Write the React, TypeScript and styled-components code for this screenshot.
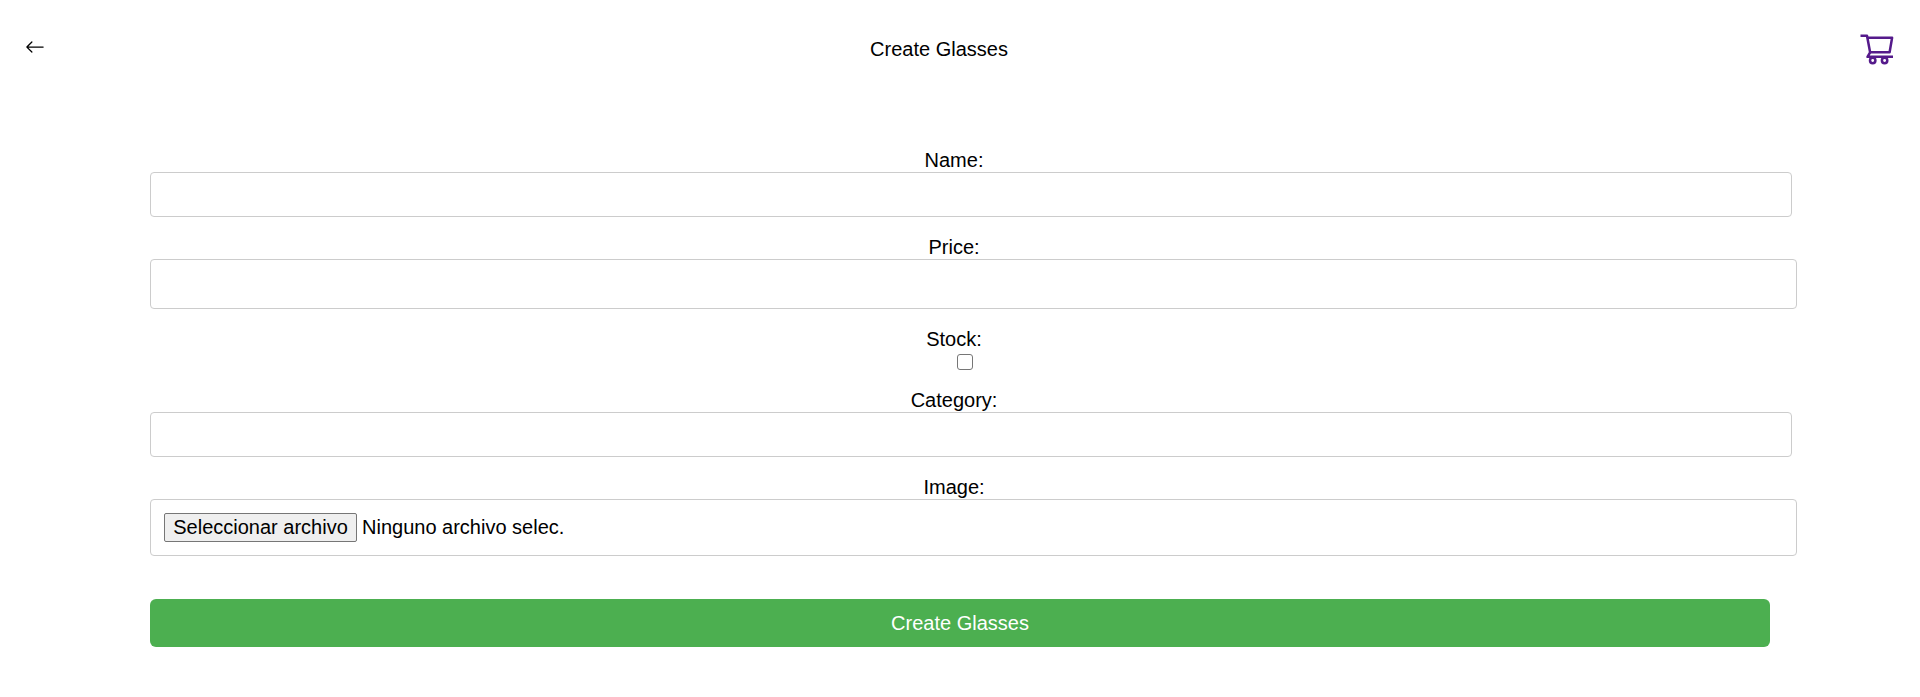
import React from "react";
import styled, { createGlobalStyle } from "styled-components";
import { BsArrowLeft } from "react-icons/bs";

const GlobalStyle = createGlobalStyle`
  body {
    margin: 0;
    background: #fff;
    color: #000;
    font: 20px/23px "Liberation Sans", Arial, sans-serif;
  }
`;

const Page = styled.div`
  min-height: 697px;
`;

const Header = styled.header`
  display: flex;
  justify-content: space-between;
  align-items: flex-start;
  height: 119px;
  padding: 30px 24px 0 25px;
`;

const BackLink = styled.a`
  display: flex;
  padding-top: 7px;
  width: 40px;
  color: #000;
`;

const Title = styled.div`
  padding-top: 8px;
  margin-right: 43px;
`;

const CartLink = styled.a`
  display: flex;
  color: #551a8b;
`;

const Form = styled.form`
  display: flex;
  flex-direction: column;
  width: 1608px;
  margin-left: 150px;
`;

const Field = styled.div<{ $gap?: number }>`
  display: flex;
  flex-direction: column;
  margin-bottom: ${({ $gap = 19 }) => $gap}px;
`;

const Label = styled.label`
  text-align: center;
`;

const TextInput = styled.input<{ $width: number; $height: number }>`
  box-sizing: border-box;
  width: ${({ $width }) => $width}px;
  height: ${({ $height }) => $height}px;
  padding: 10px 13px;
  border: 1px solid #ccc;
  border-radius: 4px;
  font: inherit;
  outline: none;
`;

const Checkbox = styled.input`
  appearance: none;
  box-sizing: border-box;
  width: 16px;
  height: 16px;
  margin: 3px 0 0 807px;
  border: 1px solid #767676;
  border-radius: 3px;
  background: #fff;
`;

const FilePicker = styled.div`
  box-sizing: border-box;
  display: flex;
  align-items: center;
  gap: 5px;
  width: 1647px;
  height: 57px;
  padding: 0 13px;
  border: 1px solid #ccc;
  border-radius: 4px;
`;

const FileButton = styled.button`
  box-sizing: border-box;
  width: 193px;
  height: 29px;
  padding: 0;
  border: 1px solid #767676;
  border-radius: 2px;
  background: #efefef;
  color: #000;
  font: inherit;
  white-space: nowrap;
`;

const SubmitButton = styled.button`
  width: 1620px;
  height: 48px;
  padding: 0;
  border: 0;
  border-radius: 6px;
  background: #4caf50;
  color: #fff;
  font: inherit;
`;

const CartIcon = () => (
  <svg
    width="40"
    height="40"
    viewBox="0 0 40 40"
    fill="none"
    stroke="currentColor"
    strokeWidth="2.5"
    strokeLinejoin="round"
  >
    <path d="M4.5 5.8H11L14.1 22.3L11.5 26.8H37" />
    <path d="M11.4 7.8H36.1L33.6 22.3H14.1" />
    <circle cx="16.7" cy="30.5" r="2.7" />
    <circle cx="28.6" cy="30.5" r="2.7" />
  </svg>
);

export default function App() {
  return (
    <Page>
      <GlobalStyle />
      <Header>
        <BackLink aria-label="Back">
          <BsArrowLeft size={20} />
        </BackLink>
        <Title>Create Glasses</Title>
        <CartLink aria-label="Cart">
          <CartIcon />
        </CartLink>
      </Header>
      <Form>
        <Field>
          <Label htmlFor="name">Name:</Label>
          <TextInput id="name" type="text" $width={1642} $height={45} />
        </Field>
        <Field>
          <Label htmlFor="price">Price:</Label>
          <TextInput id="price" type="text" $width={1647} $height={50} />
        </Field>
        <Field>
          <Label htmlFor="stock">Stock:</Label>
          <Checkbox id="stock" type="checkbox" />
        </Field>
        <Field>
          <Label htmlFor="category">Category:</Label>
          <TextInput id="category" type="text" $width={1642} $height={45} />
        </Field>
        <Field $gap={43}>
          <Label>Image:</Label>
          <FilePicker>
            <FileButton type="button">Seleccionar archivo</FileButton>
            <span>Ninguno archivo selec.</span>
          </FilePicker>
        </Field>
        <SubmitButton type="button">Create Glasses</SubmitButton>
      </Form>
    </Page>
  );
}
